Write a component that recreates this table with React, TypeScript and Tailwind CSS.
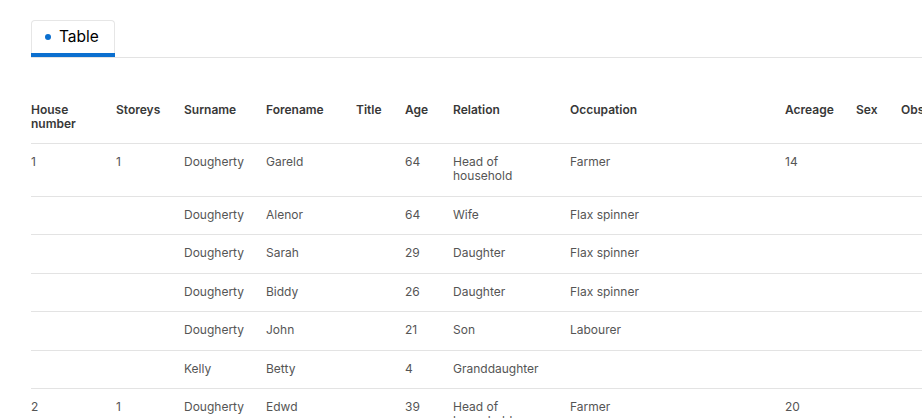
import React from "react";

const cols = [
  { key: "house", label: "House number", w: 85 },
  { key: "storeys", label: "Storeys", w: 68 },
  { key: "surname", label: "Surname", w: 82 },
  { key: "forename", label: "Forename", w: 90 },
  { key: "title", label: "Title", w: 49 },
  { key: "age", label: "Age", w: 48 },
  { key: "relation", label: "Relation", w: 117 },
  { key: "occupation", label: "Occupation", w: 215 },
  { key: "acreage", label: "Acreage", w: 71 },
  { key: "sex", label: "Sex", w: 45 },
  { key: "obs", label: "Observations", w: 140 },
];

type Row = Record<string, string>;

const rows: Row[] = [
  { house: "1", storeys: "1", surname: "Dougherty", forename: "Gareld", age: "64", relation: "Head of household", occupation: "Farmer", acreage: "14" },
  { surname: "Dougherty", forename: "Alenor", age: "64", relation: "Wife", occupation: "Flax spinner" },
  { surname: "Dougherty", forename: "Sarah", age: "29", relation: "Daughter", occupation: "Flax spinner" },
  { surname: "Dougherty", forename: "Biddy", age: "26", relation: "Daughter", occupation: "Flax spinner" },
  { surname: "Dougherty", forename: "John", age: "21", relation: "Son", occupation: "Labourer" },
  { surname: "Kelly", forename: "Betty", age: "4", relation: "Granddaughter", occupation: "" },
  { house: "2", storeys: "1", surname: "Dougherty", forename: "Edwd", age: "39", relation: "Head of household", occupation: "Farmer", acreage: "20" },
];

export default function App() {
  return (
    <div className="w-[922px] h-[418px] overflow-hidden bg-white" style={{ fontFamily: "Inter, 'Noto Sans', sans-serif" }}>
      <div className="pt-[20px] pl-[31px]">
        <div className="flex border-b border-[#e3e3e3]">
          <div className="relative flex items-center gap-[8px] h-[37px] w-[84px] pl-[13px] pb-[5px] border border-b-0 border-[#e6e6e6] rounded-t-[4px] text-[15.5px] text-black">
            <span className="w-[6px] h-[6px] rounded-full bg-[#0b6fcf]" />
            <span className="leading-none">Table</span>
            <span className="absolute left-[-1px] right-[-1px] bottom-0 h-[4px] bg-[#0b6fcf]" />
          </div>
        </div>
      </div>
      <div className="pl-[31px] pt-[33px]">
        <table className="table-fixed border-collapse" style={{ width: cols.reduce((a, c) => a + c.w, 0) }}>
          <colgroup>
            {cols.map((c) => (
              <col key={c.key} style={{ width: c.w }} />
            ))}
          </colgroup>
          <thead>
            <tr className="border-b border-[#e3e3e3]">
              {cols.map((c) => (
                <th
                  key={c.key}
                  className="text-left align-top pt-[12px] pb-[12px] pr-[12px] text-[12px] leading-[14px] font-semibold text-[#383838] whitespace-normal"
                >
                  <div className={c.key === "house" ? "max-w-[60px]" : ""}>{c.label}</div>
                </th>
              ))}
            </tr>
          </thead>
          <tbody>
            {rows.map((r, i) => (
              <tr key={i} className="border-b border-[#e3e3e3]">
                {cols.map((c) => (
                  <td
                    key={c.key}
                    className="text-left align-top pt-[11px] pb-[12.5px] pr-[12px] text-[12px] leading-[14px] text-[#555555]"
                  >
                    <div className={c.key === "relation" ? "max-w-[88px]" : ""}>{r[c.key] ?? ""}</div>
                  </td>
                ))}
              </tr>
            ))}
          </tbody>
        </table>
      </div>
    </div>
  );
}
